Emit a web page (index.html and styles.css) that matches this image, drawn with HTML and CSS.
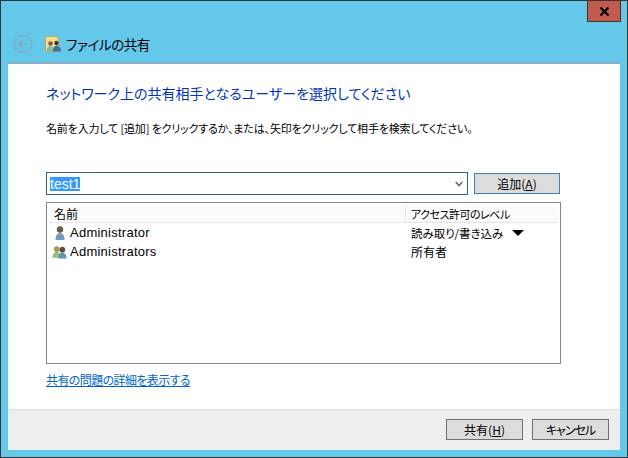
FILE: index.html
```html
<!DOCTYPE html>
<html lang="ja">
<head>
<meta charset="utf-8">
<title>ファイルの共有</title>
<link rel="stylesheet" href="styles.css">
</head>
<body>
<div class="window">
  <div class="caption">
    <div class="close"><svg width="11" height="9" viewBox="0 0 11 9"><path d="M1.500 .5 9.500 8.500M9.500 .5 1.500 8.500" stroke="#000" stroke-width="2.200" fill="none"/></svg></div>
  </div>
  <div class="titlebar">
    <svg class="back" width="20" height="20" viewBox="0 0 20 20"><circle cx="10" cy="10" r="8.800" fill="none" stroke="#7faec6" stroke-width="1.500"/><path d="M15.500 10H6M9.500 6 5.500 10l4 4" fill="none" stroke="#7faec6" stroke-width="1.600"/></svg>
    <svg class="appicon" width="16" height="16" viewBox="0 0 16 16">
      <path d="M.5 .5H11l2.500 2V15.500H.5Z" fill="#f3dc92" stroke="#c9a94f"/>
      <circle cx="5.500" cy="7.500" r="2.200" fill="#7a5a3e"/><path d="M1.500 15.500c0-4 2-5.500 4-5.500s4 1.500 4 5.500Z" fill="#7fc0a0"/>
      <circle cx="11.500" cy="7" r="2.200" fill="#3d3a3a"/><path d="M8 15.500c0-4 2-6 3.500-6S16 11.500 16 15.500Z" fill="#3f6f9a"/>
    </svg>
    <span class="title">ファイルの共有</span>
  </div>
  <div class="client">
    <div class="content">
      <h1 class="heading">ネットワーク上の共有相手となるユーザーを選択してください</h1>
      <p class="hint">名前を入力して [追加] をクリックするか、または、矢印をクリックして相手を検索してください。</p>
      <div class="addrow">
        <div class="combo">
          <span class="selected">test1</span>
          <svg class="chev" width="8" height="6" viewBox="0 0 8 6"><path d="M.7 1 4 4.500 7.300 1" fill="none" stroke="#707070" stroke-width="1.800"/></svg>
        </div>
        <div class="btn btn-add">追加(<u>A</u>)</div>
      </div>
      <div class="list">
        <div class="list-head">
          <div class="col-name">名前</div>
          <div class="col-level">アクセス許可のレベル</div>
        </div>
        <div class="row">
          <div class="col-name cell">
            <svg class="uicon" width="16" height="16" viewBox="0 0 16 16"><circle cx="8" cy="4.500" r="3.200" fill="#6b5a4c"/><path d="M3.500 15c0-5 2-7 4.500-7s4.500 2 4.500 7Z" fill="#6f9cc0"/></svg>
            <span>Administrator</span>
          </div>
          <div class="col-level cell"><span class="access">読み取り/書き込み</span><svg class="dd" width="12" height="6" viewBox="0 0 12 6"><path d="M0 0H12L6 6Z" fill="#000"/></svg></div>
        </div>
        <div class="row">
          <div class="col-name cell">
            <svg class="uicon" width="16" height="16" viewBox="0 0 17 16"><circle cx="5" cy="5" r="3" fill="#a89a5a"/><path d="M.5 14c0-4 2-6 4.500-6s4 2 4 6Z" fill="#8cbf70"/><circle cx="11" cy="5.500" r="3" fill="#5a4d44"/><path d="M6.500 15c0-4 2-6.500 4.500-6.500s4.500 2.500 4.500 6.500Z" fill="#5f92bd"/></svg>
            <span>Administrators</span>
          </div>
          <div class="col-level cell"><span>所有者</span></div>
        </div>
      </div>
      <a class="link" href="#">共有の問題の詳細を表示する</a>
    </div>
    <div class="footer">
      <div class="btn btn-foot">共有(<u>H</u>)</div>
      <div class="btn btn-foot btn-cancel">キャンセル</div>
    </div>
  </div>
</div>
</body>
</html>
```
FILE: styles.css
```css
* { box-sizing: border-box; }
html, body { margin: 0; padding: 0; }
body { width: 628px; height: 458px; overflow: hidden; font-family: "Noto Sans CJK JP", "Liberation Sans", sans-serif; font-feature-settings: "palt"; }
.window { width: 628px; height: 458px; background: #63c8e9; border: 1px solid #333; padding: 0 7px 7px 7px; display: flex; flex-direction: column; }
.caption { height: 21px; margin-top: -1px; display: flex; justify-content: flex-end; flex: none; }
.close { width: 34px; height: 22px; margin-right: -1px; background: #c15b50; border: 1px solid #40322f; display: flex; align-items: center; justify-content: center; }
.titlebar { height: 41px; flex: none; display: flex; align-items: center; padding: 5px 0 0 5px; }
.back { margin-right: 12px; flex: none; }
.appicon { flex: none; margin-right: 5px; }
.title { font-size: 13.500px; letter-spacing: -.4px; color: #000; }
.client { flex: 1; background: #fff; border-top: 2px solid #86aec4; display: flex; flex-direction: column; min-height: 0; }
.content { flex: 1; padding: 0 0 0 38px; display: flex; flex-direction: column; min-height: 0; }
.heading { margin: 18px 0 0; font-weight: 400; font-size: 14px; line-height: 22px; color: #0033bc; white-space: nowrap; }
.hint { margin: 16px 0 0; font-size: 11px; line-height: 16px; letter-spacing: -.16px; color: #000; white-space: nowrap; }
.addrow { display: flex; margin-top: 36px; height: 23px; }
.combo { width: 422px; height: 23px; border: 1px solid #2f6286; display: flex; align-items: center; justify-content: space-between; padding: 0 4px 0 3px; }
.selected { background: #3399ff; color: #fff; font: 14px/14px "Liberation Sans", sans-serif; }
.btn { background: #dcdcdc; border: 1px solid #707070; display: flex; align-items: center; justify-content: center; font-size: 12px; color: #000; }
.btn-add { width: 86px; height: 21px; margin: 1px 0 0 6px; border-color: #3c7fb1; }
.btn-cancel { letter-spacing: -1px; }
.list { width: 515px; height: 162px; margin-top: 7px; border: 1px solid #828790; padding: 2px; flex: none; }
.list-head { display: flex; height: 18px; background: #fbfbfb; border-bottom: 1px solid #e5e5e5; font-size: 12px; color: #000; }
.col-name { width: 356px; padding-left: 5px; display: flex; align-items: center; }
.col-level { flex: 1; padding-left: 5px; display: flex; align-items: center; border-left: 1px solid #e5e5e5; font-size: 11px; letter-spacing: -.5px; }
.row { display: flex; height: 19px; font-size: 12px; color: #000; }
.cell { border: 0; }
.row .col-name { font: 13px "Liberation Sans", sans-serif; letter-spacing: .25px; padding-left: 3px; }
.row .col-level { padding-left: 6px; font-size: 12px; letter-spacing: 0; }
.row .access { font-size: 11.500px; letter-spacing: -.05px; }
.uicon { margin-right: 2px; flex: none; }
.dd { margin-left: 9px; }
.link { margin-top: 7px; align-self: flex-start; font-size: 12px; line-height: 17px; letter-spacing: -.6px; color: #0066cc; white-space: nowrap; }
.footer { height: 41px; flex: none; background: #eee; border-top: 1px solid #dfdfdf; display: flex; justify-content: flex-end; gap: 9px; padding: 9px 11px 0 0; }
.btn-foot { width: 77px; height: 21px; }
```
